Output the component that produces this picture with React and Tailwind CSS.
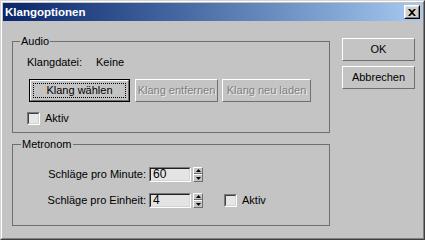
import React from "react";

const FONT = { fontFamily: '"Liberation Sans", Arial, sans-serif' };

function Btn({ children, w, disabled, def }) {
  if (def) {
    return (
      <div className={`h-[23px] ${w} border border-black flex`}>
        <div className="flex-1 border border-t-white border-l-white border-r-[#6f6f6f] border-b-[#6f6f6f] p-[2px] flex">
          <div className="flex-1 border border-dotted border-black flex items-center justify-center text-black leading-[13px]">
            {children}
          </div>
        </div>
      </div>
    );
  }
  return (
    <div
      className={`h-[23px] ${w} border border-t-white border-l-white border-r-[#6f6f6f] border-b-[#6f6f6f] flex items-center justify-center leading-[13px] ${
        disabled ? "text-[#7e7e7e] [text-shadow:1px_1px_0_#ececec]" : "text-black"
      }`}
    >
      {children}
    </div>
  );
}

function Check() {
  return (
    <div className="w-[13px] h-[13px] border border-t-[#7a7a7a] border-l-[#7a7a7a] border-r-white border-b-white">
      <div className="w-full h-full border border-t-[#404040] border-l-[#404040] border-r-[#d4d4d4] border-b-[#d4d4d4] bg-[#e6e6e6]" />
    </div>
  );
}

function Spinner() {
  return (
    <div className="w-[10px] h-[15px] border border-t-white border-l-white border-r-[#6f6f6f] border-b-[#6f6f6f] flex flex-col">
      <div className="h-[6px] flex items-center justify-center border-b border-b-[#6f6f6f]">
        <svg width="5" height="3" viewBox="0 0 5 3">
          <path d="M2.5 0 L5 3 L0 3 Z" fill="#000" />
        </svg>
      </div>
      <div className="flex-1 flex items-center justify-center border-t border-t-white">
        <svg width="5" height="3" viewBox="0 0 5 3">
          <path d="M0 0 L5 0 L2.5 3 Z" fill="#000" />
        </svg>
      </div>
    </div>
  );
}

function Edit({ value }) {
  return (
    <div className="w-[42px] h-[15px] border border-t-[#7a7a7a] border-l-[#7a7a7a] border-r-white border-b-white">
      <div className="w-full h-full border border-t-[#202020] border-l-[#202020] border-r-[#d4d4d4] border-b-[#d4d4d4] bg-[#e4e4e4] pl-[2px] text-black text-[12px] leading-[11px]">
        {value}
      </div>
    </div>
  );
}

export default function App() {
  return (
    <div style={FONT} className="w-[425px] h-[240px] text-[11px] text-black">
      <div className="w-full h-full border border-t-[#d4d4d4] border-l-[#d4d4d4] border-r-[#404040] border-b-[#404040]">
        <div className="w-full h-full border border-t-white border-l-white border-r-[#808080] border-b-[#808080] bg-[#c4c4c4] p-px flex flex-col">
          {/* Title bar */}
          <div className="h-[18px] flex items-center bg-gradient-to-r from-[#0a246a] to-[#a6caf0] pl-[2px] pr-[2px]">
            <div className="flex-1 text-white font-bold text-[11.5px] leading-[14px]">Klangoptionen</div>
            <div className="w-[16px] h-[14px] border border-t-white border-l-white border-r-black border-b-black">
              <div className="w-full h-full border border-t-[#e8e8e8] border-l-[#e8e8e8] border-r-[#808080] border-b-[#808080] bg-[#d4d0c8] flex items-center justify-center">
                <svg width="8" height="7" viewBox="0 0 8 7">
                  <path d="M0 0 H2 L4 2 L6 0 H8 L5 3.5 L8 7 H6 L4 5 L2 7 H0 L3 3.5 Z" fill="#000" />
                </svg>
              </div>
            </div>
          </div>

          {/* Content */}
          <div className="flex pt-[14px] pl-[9px]">
            <div className="w-[318px] flex flex-col gap-[5px]">
              <fieldset className="h-[98px] border border-[#6f6f6f] px-0 pb-0">
                <legend className="ml-[7px] px-[1px] leading-[13px]">Audio</legend>
                <div className="pl-[14px] mt-[8px] h-[13px] flex items-center leading-[13px]">
                  <div className="w-[69px]">Klangdatei:</div>
                  <div>Keine</div>
                </div>
                <div className="pl-[16px] mt-[10px] flex">
                  <Btn w="w-[101px]" def>Klang wählen</Btn>
                  <div className="ml-[5px]">
                    <Btn w="w-[83px]" disabled>Klang entfernen</Btn>
                  </div>
                  <div className="ml-[4px]">
                    <Btn w="w-[89px]" disabled>Klang neu laden</Btn>
                  </div>
                </div>
                <div className="pl-[14px] mt-[10px] flex items-center h-[13px]">
                  <Check />
                  <div className="ml-[5px] leading-[13px]">Aktiv</div>
                </div>
              </fieldset>

              <fieldset className="h-[88px] border border-[#6f6f6f] px-0 pb-0">
                <legend className="ml-[8px] px-[1px] leading-[13px]">Metronom</legend>
                <div className="mt-[16px] flex items-center h-[15px]">
                  <div className="w-[133px] text-right leading-[13px]">Schläge pro Minute:</div>
                  <div className="ml-[3px]"><Edit value="60" /></div>
                  <div className="ml-[2px]"><Spinner /></div>
                </div>
                <div className="mt-[11px] flex items-center h-[15px]">
                  <div className="w-[133px] text-right leading-[13px]">Schläge pro Einheit:</div>
                  <div className="ml-[3px]"><Edit value="4" /></div>
                  <div className="ml-[2px]"><Spinner /></div>
                  <div className="ml-[21px]"><Check /></div>
                  <div className="ml-[5px] leading-[13px]">Aktiv</div>
                </div>
              </fieldset>
            </div>

            <div className="ml-[12px] pt-[3px] flex flex-col gap-[5px]">
              <Btn w="w-[73px]">OK</Btn>
              <Btn w="w-[73px]">Abbrechen</Btn>
            </div>
          </div>
        </div>
      </div>
    </div>
  );
}
